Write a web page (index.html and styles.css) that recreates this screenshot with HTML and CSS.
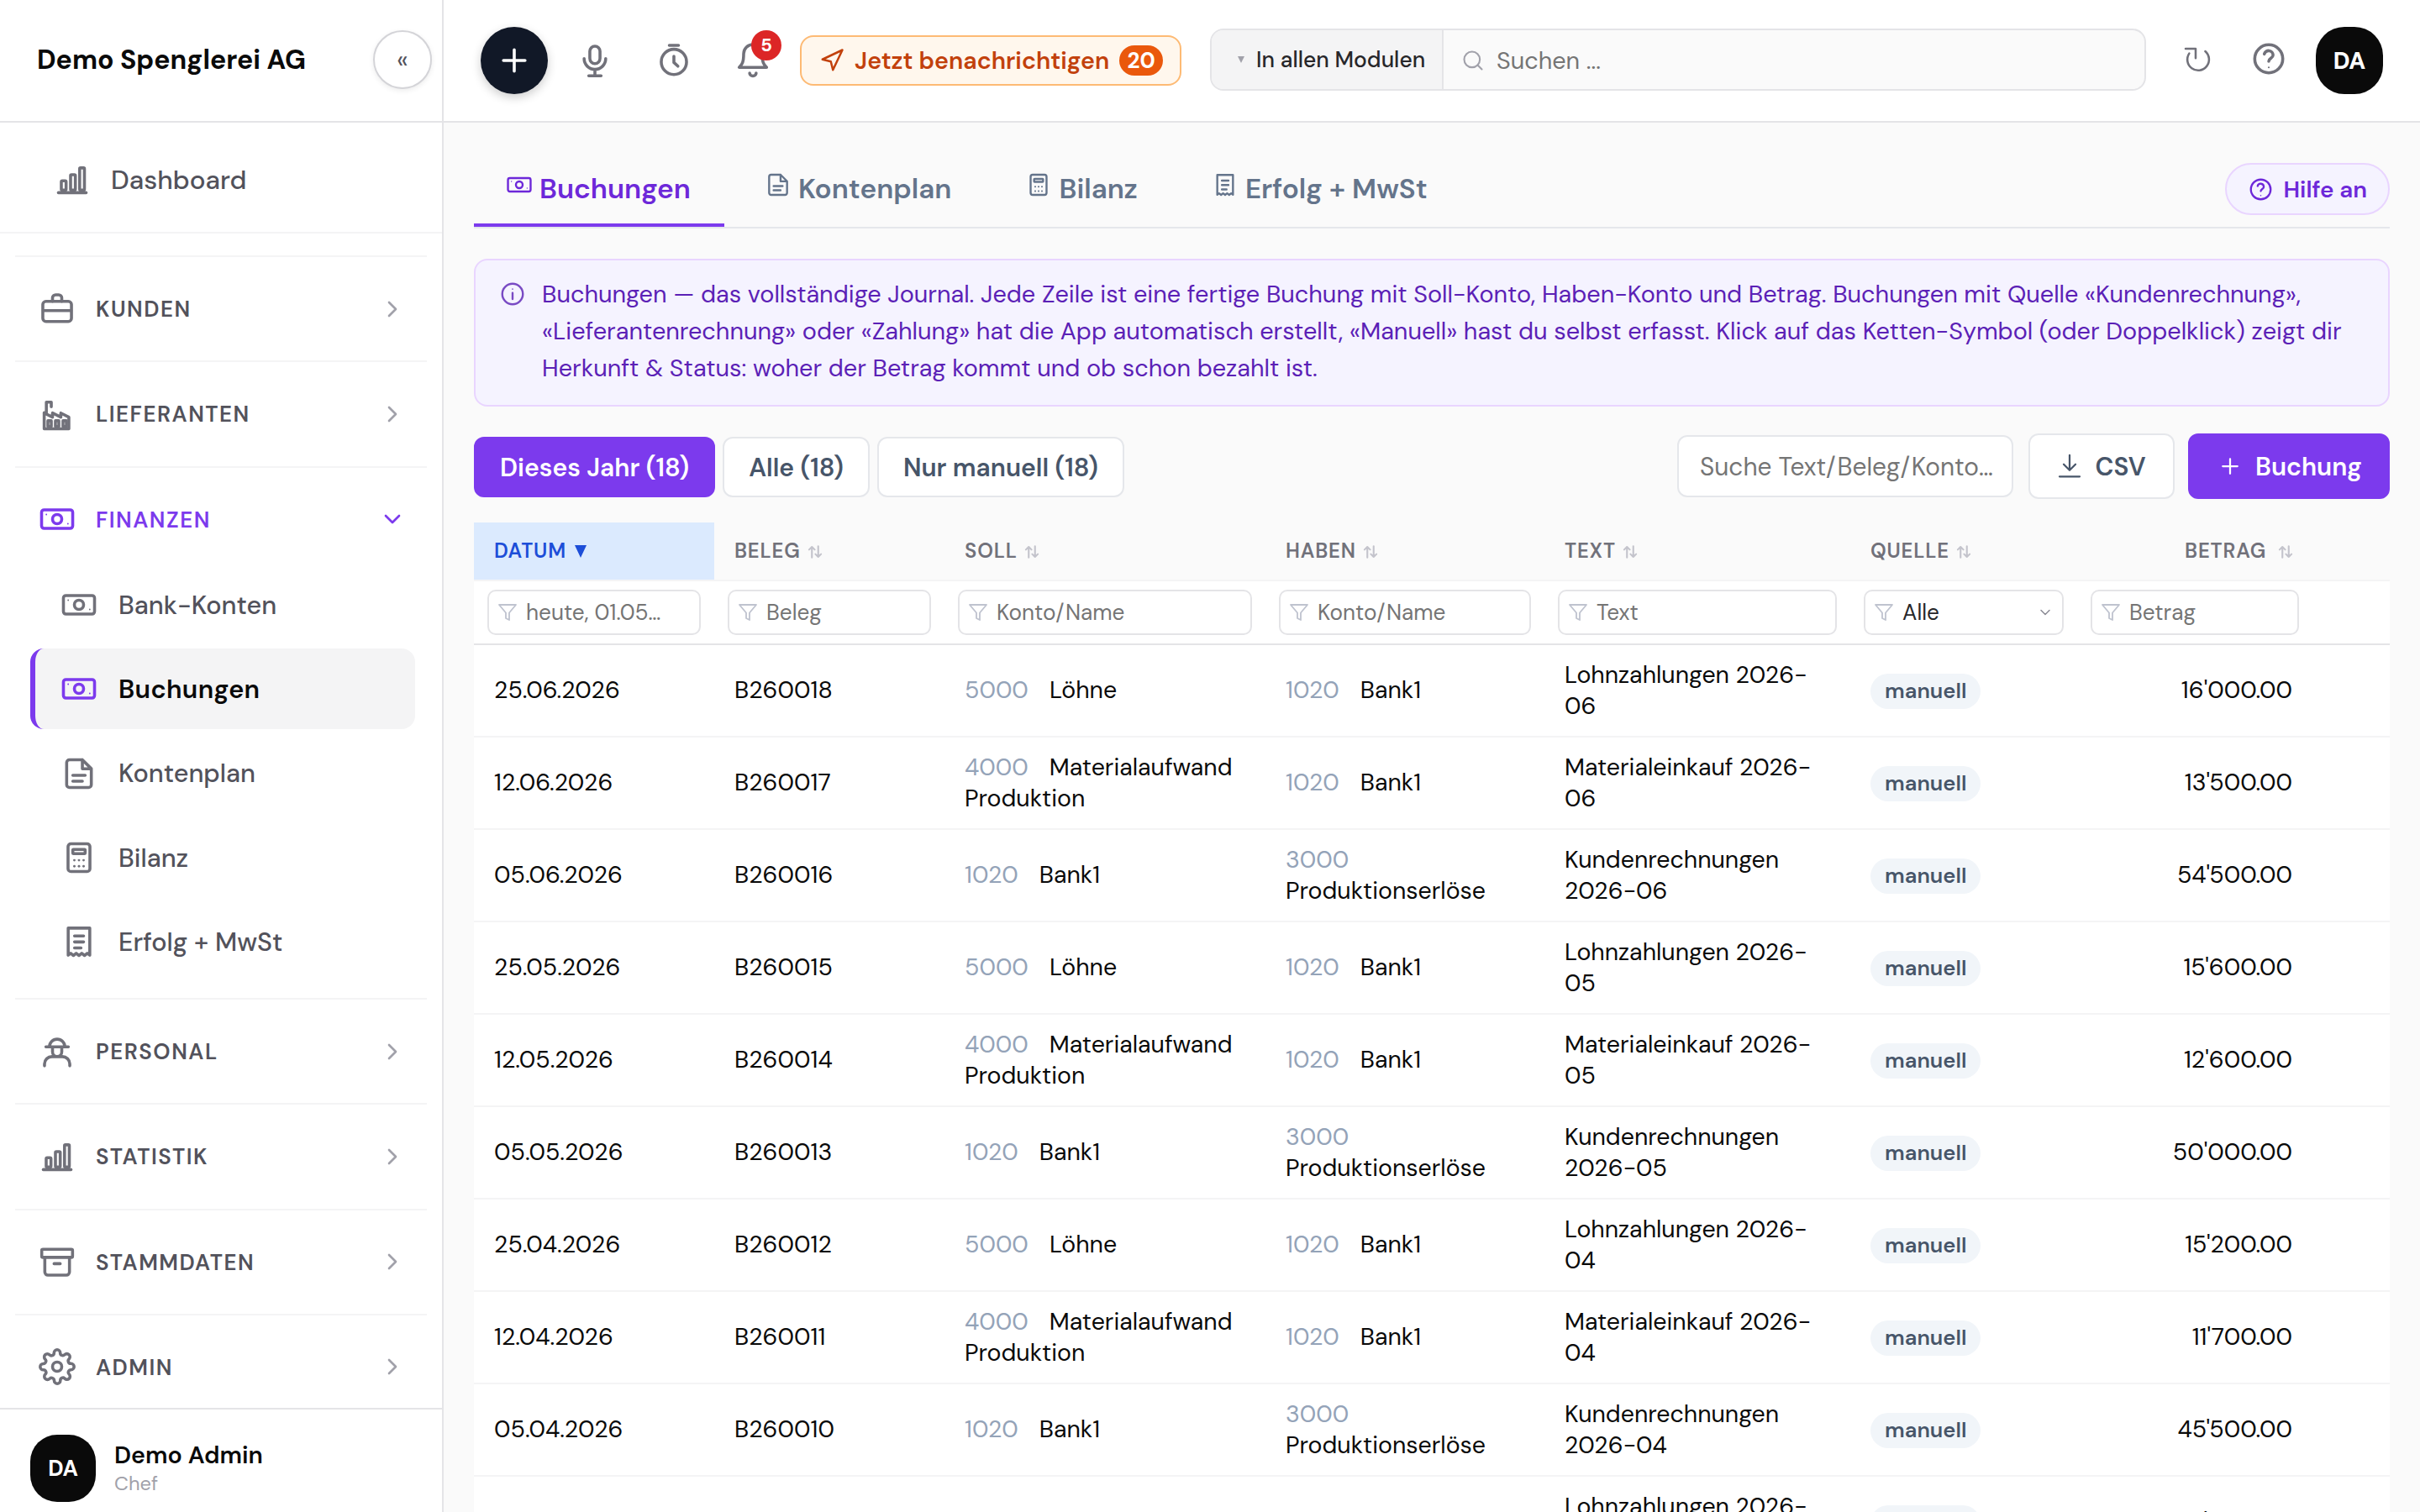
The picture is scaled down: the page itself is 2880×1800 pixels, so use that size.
FILE: index.html
```html
<!DOCTYPE html>
<html lang="de">
<head>
    <meta charset="UTF-8">
    <meta name="viewport" content="width=device-width, initial-scale=1.0">
    <title>Buchungen – Demo Spenglerei AG</title>
    <link rel="stylesheet" href="styles.css">
</head>
<body>
    <!-- Icons -->
    <svg class="sprite" xmlns="http://www.w3.org/2000/svg">
        <symbol id="i-plus" viewBox="0 0 24 24"><path d="M12 5v14M5 12h14"/></symbol>
        <symbol id="i-mic" viewBox="0 0 24 24"><rect x="8.7" y="2.7" width="6.6" height="11.3" rx="3.3"/><path d="M5 10.8a7 7 0 0 0 14 0M12 18v4M8 22h8"/></symbol>
        <symbol id="i-timer" viewBox="0 0 24 24"><circle cx="12" cy="12.9" r="8.2"/><path d="M9 2.2h6M12 9.3v4l2.6 2.4"/></symbol>
        <symbol id="i-bell" viewBox="0 0 24 24"><path d="M18 7.6A6 6 0 0 0 6 7.6c0 6-1.2 7-2.9 8.9h17.8C19.2 14.6 18 13.6 18 7.6M9.9 20.2a2.1 1.9 0 0 0 4.2 0"/></symbol>
        <symbol id="i-send" viewBox="0 0 24 24"><path d="M3 11 22 2l-9 19-2-8-8-2z"/></symbol>
        <symbol id="i-search" viewBox="0 0 24 24"><circle cx="11" cy="11" r="8"/><path d="m21 21-4.3-4.3"/></symbol>
        <symbol id="i-refresh" viewBox="0 0 24 24"><path d="M17.6 4.7a8.6 8.6 0 1 1-12.7 1.7M2 2.6h8v7.6"/></symbol>
        <symbol id="i-help" viewBox="0 0 24 24"><circle cx="12" cy="12" r="9.1"/><path d="M9.1 8.9a2.9 2.9 0 0 1 5.7.7c0 2-2.8 2-2.8 4"/><circle class="dot" cx="12" cy="17.6" r=".6"/></symbol>
        <symbol id="i-info" viewBox="0 0 24 24"><circle cx="12" cy="12" r="9.2"/><path d="M12 11v5.5"/><circle class="dot" cx="12" cy="7.6" r=".6"/></symbol>
        <symbol id="i-chart" viewBox="0 0 24 24"><path d="M3 20.4h18"/><rect x="4.9" y="12.7" width="3.1" height="6" rx=".6"/><rect x="10.9" y="8.7" width="3.1" height="10" rx=".6"/><rect x="16.8" y="4.3" width="3.1" height="14.4" rx=".6"/></symbol>
        <symbol id="i-briefcase" viewBox="0 0 24 24"><rect x="2.7" y="7" width="18.6" height="13" rx="2"/><path d="M9 7V4.7a2 2 0 0 1 2-2h2a2 2 0 0 1 2 2V7M3 13h18"/></symbol>
        <symbol id="i-factory" viewBox="0 0 24 24"><path d="M5 12V4.2h3.2v3M3.6 11v10.5h16V14l-5.2-2.7V14L9 11.3V14l-5.4-2.7"/><rect x="6" y="16.3" width="2.2" height="3.8"/><rect x="10.9" y="16.3" width="2.2" height="3.8"/><rect x="15.8" y="16.3" width="2.2" height="3.8"/></symbol>
        <symbol id="i-cash" viewBox="0 0 24 24"><rect x="1.9" y="6" width="20.2" height="12" rx="1.6"/><circle cx="12" cy="12" r="3"/><circle class="dot" cx="5" cy="9" r=".5"/><circle class="dot" cx="19" cy="15" r=".5"/></symbol>
        <symbol id="i-file" viewBox="0 0 24 24"><path d="M14.2 3H5.8A1.8 1.8 0 0 0 4 4.8v14.4A1.8 1.8 0 0 0 5.8 21h12.4a1.8 1.8 0 0 0 1.8-1.8V8.8L14.2 3v5.9H20M8 13.1h8M8 16.9h6.2"/></symbol>
        <symbol id="i-calc" viewBox="0 0 24 24"><rect x="4.9" y="3" width="14.2" height="18" rx="1.8"/><rect x="8" y="6.7" width="8" height="2.7" rx=".4"/><g class="dot"><circle cx="9" cy="13.7" r=".8"/><circle cx="12" cy="13.7" r=".8"/><circle cx="15" cy="13.7" r=".8"/><circle cx="9" cy="17.6" r=".8"/><circle cx="12" cy="17.6" r=".8"/><circle cx="15" cy="17.6" r=".8"/></g></symbol>
        <symbol id="i-receipt" viewBox="0 0 24 24"><path d="M5 3.2h14v17.6l-1.6-1.2-1.8 1.4-1.8-1.4-1.8 1.4-1.8-1.4-1.8 1.4-1.8-1.4L5 20.8zM9.1 8.3h5.9M9.1 12.2h5.9M9.1 16.1h4.2"/></symbol>
        <symbol id="i-worker" viewBox="0 0 24 24"><path d="M7 8.9a5 5 0 0 1 10 0M4.7 8.9h14.6M9 9v3.2a3 3 0 0 0 6 0V9M3.8 21.2v-1.3A4.8 4.8 0 0 1 8.6 15.2h6.8a4.8 4.8 0 0 1 4.8 4.7v1.3"/></symbol>
        <symbol id="i-archive" viewBox="0 0 24 24"><rect x="2" y="4" width="20" height="5.2" rx=".8"/><path d="M4 9.3v9.4a2 2 0 0 0 2 2h12a2 2 0 0 0 2-2V9.3M10 13.3h4"/></symbol>
        <symbol id="i-gear" viewBox="0 0 24 24"><circle cx="12" cy="12" r="3"/><path d="M19.4 15a1.65 1.65 0 0 0 .33 1.82l.06.06a2 2 0 0 1 0 2.83 2 2 0 0 1-2.83 0l-.06-.06a1.65 1.65 0 0 0-1.82-.33 1.65 1.65 0 0 0-1 1.51V21a2 2 0 0 1-2 2 2 2 0 0 1-2-2v-.09A1.65 1.65 0 0 0 9 19.4a1.65 1.65 0 0 0-1.82.33l-.06.06a2 2 0 0 1-2.83 0 2 2 0 0 1 0-2.83l.06-.06a1.65 1.65 0 0 0 .33-1.82 1.65 1.65 0 0 0-1.51-1H3a2 2 0 0 1-2-2 2 2 0 0 1 2-2h.09A1.65 1.65 0 0 0 4.6 9a1.65 1.65 0 0 0-.33-1.82l-.06-.06a2 2 0 0 1 0-2.83 2 2 0 0 1 2.83 0l.06.06a1.65 1.65 0 0 0 1.82.33H9a1.65 1.65 0 0 0 1-1.51V3a2 2 0 0 1 2-2 2 2 0 0 1 2 2v.09a1.65 1.65 0 0 0 1 1.51 1.65 1.65 0 0 0 1.82-.33l.06-.06a2 2 0 0 1 2.83 0 2 2 0 0 1 0 2.83l-.06.06a1.65 1.65 0 0 0-.33 1.82V9a1.65 1.65 0 0 0 1.51 1H21a2 2 0 0 1 2 2 2 2 0 0 1-2 2h-.09a1.65 1.65 0 0 0-1.51 1z"/></symbol>
        <symbol id="i-right" viewBox="0 0 24 24"><path d="m9 18 6-6-6-6"/></symbol>
        <symbol id="i-down" viewBox="0 0 24 24"><path d="m6 9 6 6 6-6"/></symbol>
        <symbol id="i-filter" viewBox="0 0 24 24"><path d="M22 3H2l8 9.46V19l4 2v-8.54L22 3z"/></symbol>
        <symbol id="i-download" viewBox="0 0 24 24"><path d="M12 1.5v14M6.4 10.200l5.600 5.600 5.600-5.600M2.400 21.800h19.200"/></symbol>
        <symbol id="i-sort" viewBox="0 0 24 24"><path d="M7 21V4M2.5 8.5 7 4l4.5 4.5M17 3v17M12.5 15.5 17 20l4.5-4.5"/></symbol>
    </svg>

    <div class="app">
        <!-- Sidebar -->
        <aside class="sidebar">
            <div class="brand">
                <span>Demo Spenglerei AG</span>
                <button class="collapse">«</button>
            </div>
            <a class="dashboard"><svg class="icon"><use href="#i-chart"/></svg>Dashboard</a>
            <nav class="nav">
                <div class="nav-group"><svg class="icon"><use href="#i-briefcase"/></svg><span>KUNDEN</span><svg class="chevron"><use href="#i-right"/></svg></div>
                <div class="nav-group"><svg class="icon"><use href="#i-factory"/></svg><span>LIEFERANTEN</span><svg class="chevron"><use href="#i-right"/></svg></div>
                <div class="nav-group open"><svg class="icon"><use href="#i-cash"/></svg><span>FINANZEN</span><svg class="chevron"><use href="#i-down"/></svg></div>
                <div class="nav-sub">
                    <a><svg class="icon"><use href="#i-cash"/></svg>Bank-Konten</a>
                    <a class="active"><svg class="icon"><use href="#i-cash"/></svg>Buchungen</a>
                    <a><svg class="icon"><use href="#i-file"/></svg>Kontenplan</a>
                    <a><svg class="icon"><use href="#i-calc"/></svg>Bilanz</a>
                    <a><svg class="icon"><use href="#i-receipt"/></svg>Erfolg + MwSt</a>
                </div>
                <div class="nav-group"><svg class="icon"><use href="#i-worker"/></svg><span>PERSONAL</span><svg class="chevron"><use href="#i-right"/></svg></div>
                <div class="nav-group"><svg class="icon"><use href="#i-chart"/></svg><span>STATISTIK</span><svg class="chevron"><use href="#i-right"/></svg></div>
                <div class="nav-group"><svg class="icon"><use href="#i-archive"/></svg><span>STAMMDATEN</span><svg class="chevron"><use href="#i-right"/></svg></div>
                <div class="nav-group"><svg class="icon"><use href="#i-gear"/></svg><span>ADMIN</span><svg class="chevron"><use href="#i-right"/></svg></div>
            </nav>
            <div class="user">
                <div class="avatar">DA</div>
                <div>
                    <div class="user-name">Demo Admin</div>
                    <div class="user-role">Chef</div>
                </div>
            </div>
        </aside>

        <div class="main">
            <!-- Top bar -->
            <header class="topbar">
                <button class="add"><svg class="icon"><use href="#i-plus"/></svg></button>
                <button class="tool"><svg class="icon"><use href="#i-mic"/></svg></button>
                <button class="tool"><svg class="icon"><use href="#i-timer"/></svg></button>
                <button class="tool"><svg class="icon"><use href="#i-bell"/></svg><span class="count">5</span></button>
                <button class="notify"><svg><use href="#i-send"/></svg>Jetzt benachrichtigen<span>20</span></button>
                <div class="search">
                    <div class="scope"><i></i>In allen Modulen</div>
                    <div class="query"><svg><use href="#i-search"/></svg>Suchen ...</div>
                </div>
                <button class="tool reload"><svg><use href="#i-refresh"/></svg></button>
                <button class="tool help"><svg class="icon"><use href="#i-help"/></svg></button>
                <div class="avatar">DA</div>
            </header>

            <main class="content">
                <div class="tabs">
                    <a class="tab active"><svg><use href="#i-cash"/></svg>Buchungen</a>
                    <a class="tab"><svg><use href="#i-file"/></svg>Kontenplan</a>
                    <a class="tab"><svg><use href="#i-calc"/></svg>Bilanz</a>
                    <a class="tab"><svg><use href="#i-receipt"/></svg>Erfolg + MwSt</a>
                    <button class="help-toggle"><svg><use href="#i-help"/></svg>Hilfe an</button>
                </div>

                <div class="info">
                    <svg><use href="#i-info"/></svg>
                    <p>Buchungen — das vollständige Journal. Jede Zeile ist eine fertige Buchung mit Soll-Konto, Haben-Konto und Betrag. Buchungen mit Quelle «Kundenrechnung»,<br>«Lieferantenrechnung» oder «Zahlung» hat die App automatisch erstellt, «Manuell» hast du selbst erfasst. Klick auf das Ketten-Symbol (oder Doppelklick) zeigt dir<br>Herkunft &amp; Status: woher der Betrag kommt und ob schon bezahlt ist.</p>
                </div>

                <div class="toolbar">
                    <button class="chip active">Dieses Jahr (18)</button>
                    <button class="chip">Alle (18)</button>
                    <button class="chip">Nur manuell (18)</button>
                    <div class="table-search">Suche Text/Beleg/Konto…</div>
                    <button class="btn csv"><svg><use href="#i-download"/></svg>CSV</button>
                    <button class="btn primary"><svg><use href="#i-plus"/></svg>Buchung</button>
                </div>

                <table class="journal">
                    <colgroup>
                        <col class="c-date"><col class="c-doc"><col class="c-debit"><col class="c-credit">
                        <col class="c-text"><col class="c-source"><col class="c-amount"><col class="c-actions">
                    </colgroup>
                    <thead>
                        <tr class="head">
                            <th class="sorted">DATUM <i></i></th>
                            <th>BELEG<svg><use href="#i-sort"/></svg></th>
                            <th>SOLL<svg><use href="#i-sort"/></svg></th>
                            <th>HABEN<svg><use href="#i-sort"/></svg></th>
                            <th>TEXT<svg><use href="#i-sort"/></svg></th>
                            <th>QUELLE<svg><use href="#i-sort"/></svg></th>
                            <th class="num">BETRAG<svg><use href="#i-sort"/></svg></th>
                            <th></th>
                        </tr>
                        <tr class="filters">
                            <td><div class="filter"><svg><use href="#i-filter"/></svg>heute, 01.05…</div></td>
                            <td><div class="filter"><svg><use href="#i-filter"/></svg>Beleg</div></td>
                            <td><div class="filter"><svg><use href="#i-filter"/></svg>Konto/Name</div></td>
                            <td><div class="filter"><svg><use href="#i-filter"/></svg>Konto/Name</div></td>
                            <td><div class="filter"><svg><use href="#i-filter"/></svg>Text</div></td>
                            <td><div class="filter select"><svg><use href="#i-filter"/></svg>Alle<svg class="caret"><use href="#i-down"/></svg></div></td>
                            <td><div class="filter"><svg><use href="#i-filter"/></svg>Betrag</div></td>
                            <td></td>
                        </tr>
                    </thead>
                    <tbody>
                        <tr><td>25.06.2026</td><td>B260018</td><td><span class="acc">5000</span>Löhne</td><td><span class="acc">1020</span>Bank1</td><td>Lohnzahlungen 2026-<br>06</td><td><span class="badge">manuell</span></td><td class="num">16'000.00</td><td></td></tr>
                        <tr><td>12.06.2026</td><td>B260017</td><td><span class="acc">4000</span>Materialaufwand<br>Produktion</td><td><span class="acc">1020</span>Bank1</td><td>Materialeinkauf 2026-<br>06</td><td><span class="badge">manuell</span></td><td class="num">13'500.00</td><td></td></tr>
                        <tr><td>05.06.2026</td><td>B260016</td><td><span class="acc">1020</span>Bank1</td><td><span class="acc">3000</span><br>Produktionserlöse</td><td>Kundenrechnungen<br>2026-06</td><td><span class="badge">manuell</span></td><td class="num">54'500.00</td><td></td></tr>
                        <tr><td>25.05.2026</td><td>B260015</td><td><span class="acc">5000</span>Löhne</td><td><span class="acc">1020</span>Bank1</td><td>Lohnzahlungen 2026-<br>05</td><td><span class="badge">manuell</span></td><td class="num">15'600.00</td><td></td></tr>
                        <tr><td>12.05.2026</td><td>B260014</td><td><span class="acc">4000</span>Materialaufwand<br>Produktion</td><td><span class="acc">1020</span>Bank1</td><td>Materialeinkauf 2026-<br>05</td><td><span class="badge">manuell</span></td><td class="num">12'600.00</td><td></td></tr>
                        <tr><td>05.05.2026</td><td>B260013</td><td><span class="acc">1020</span>Bank1</td><td><span class="acc">3000</span><br>Produktionserlöse</td><td>Kundenrechnungen<br>2026-05</td><td><span class="badge">manuell</span></td><td class="num">50'000.00</td><td></td></tr>
                        <tr><td>25.04.2026</td><td>B260012</td><td><span class="acc">5000</span>Löhne</td><td><span class="acc">1020</span>Bank1</td><td>Lohnzahlungen 2026-<br>04</td><td><span class="badge">manuell</span></td><td class="num">15'200.00</td><td></td></tr>
                        <tr><td>12.04.2026</td><td>B260011</td><td><span class="acc">4000</span>Materialaufwand<br>Produktion</td><td><span class="acc">1020</span>Bank1</td><td>Materialeinkauf 2026-<br>04</td><td><span class="badge">manuell</span></td><td class="num">11'700.00</td><td></td></tr>
                        <tr><td>05.04.2026</td><td>B260010</td><td><span class="acc">1020</span>Bank1</td><td><span class="acc">3000</span><br>Produktionserlöse</td><td>Kundenrechnungen<br>2026-04</td><td><span class="badge">manuell</span></td><td class="num">45'500.00</td><td></td></tr>
                        <tr><td>25.03.2026</td><td>B260009</td><td><span class="acc">5000</span>Löhne</td><td><span class="acc">1020</span>Bank1</td><td>Lohnzahlungen 2026-<br>03</td><td><span class="badge">manuell</span></td><td class="num">15'000.00</td><td></td></tr>
                    </tbody>
                </table>
            </main>
        </div>
    </div>
</body>
</html>
```
FILE: styles.css
```css
* { box-sizing: border-box; }

body {
    margin: 0;
    font-family: "DM Sans", Inter, sans-serif;
    font-size: 28.5px;
    color: #0a0a0a;
    background: #fafafa;
}

button {
    font-family: inherit;
    margin: 0;
    padding: 0;
    border: none;
    background: none;
}

p { margin: 0; }

svg {
    flex: none;
    fill: none;
    stroke: currentColor;
    stroke-width: 1.8;
    stroke-linecap: round;
    stroke-linejoin: round;
}

.sprite { display: none; }
.dot { fill: currentColor; stroke: none; }
.icon { width: 44px; height: 44px; stroke-width: 1.95; }

.app {
    display: flex;
    height: 1800px;
    overflow: hidden;
}

/* Sidebar */
.sidebar {
    width: 528px;
    flex: none;
    display: flex;
    flex-direction: column;
    background: #fff;
    border-right: 2px solid #e4e4e7;
}

.brand {
    height: 146px;
    flex: none;
    display: flex;
    align-items: center;
    justify-content: space-between;
    padding: 0 12px 2px 44px;
    border-bottom: 2px solid #e4e4e7;
    font-size: 32px;
    font-weight: 700;
}

.collapse {
    width: 70px;
    height: 70px;
    border: 2px solid #d4d4d8;
    border-radius: 50%;
    background: #fff;
    box-shadow: 0 2px 6px rgba(0, 0, 0, 0.08);
    font-size: 30px;
    color: #52525b;
}

.dashboard {
    height: 132px;
    flex: none;
    display: flex;
    align-items: center;
    gap: 24px;
    padding: 6px 0 0 64px;
    border-bottom: 2px solid #f4f4f5;
    font-size: 31.4px;
    font-weight: 500;
    color: #52525b;
}

.dashboard .icon, .nav .icon { color: #71717a; }

.nav {
    flex: 1;
    min-height: 0;
    overflow: hidden;
    padding: 26px 18px 0;
}

.nav-group {
    height: 125.33px;
    display: flex;
    align-items: center;
    padding: 0 25px 0 28px;
    border-top: 2px solid #f4f4f5;
    font-size: 26px;
    font-weight: 600;
    letter-spacing: 1.5px;
    color: #52525b;
}

.nav-group span { flex: 1; margin-left: 24px; padding-top: 1px; }
.nav-group .chevron { width: 32px; height: 32px; stroke-width: 2; color: #a1a1aa; }
.nav-group.open, .nav-group.open .icon, .nav-group.open .chevron { color: #7c3aed; }
.nav-group.open { height: 117px; padding-top: 8px; }

.nav-sub {
    display: flex;
    flex-direction: column;
    gap: 4.3px;
    padding: 0 14px 19px 18px;
}

.nav-sub a {
    height: 96px;
    display: flex;
    align-items: center;
    gap: 25px;
    padding: 1px 0 0 30px;
    border-left: 6px solid transparent;
    border-radius: 16px;
    font-size: 30.6px;
    font-weight: 500;
    color: #52525b;
}

.nav-sub a.active {
    background: #f4f4f5;
    border-left-color: #7c3aed;
    font-weight: 600;
    color: #0a0a0a;
    letter-spacing: 0.35px;
}

.nav-sub a.active .icon { color: #7c3aed; }

.user {
    height: 124px;
    flex: none;
    display: flex;
    align-items: center;
    gap: 22px;
    padding: 18px 36px 0;
    border-top: 2px solid #e4e4e7;
}

.avatar {
    width: 80px;
    height: 80px;
    flex: none;
    display: flex;
    align-items: center;
    justify-content: center;
    border-radius: 34px;
    background: #0a0a0a;
    color: #fff;
    font-size: 28px;
    font-weight: 800;
}

.user .avatar { width: 78px; font-size: 26px; font-weight: 700; border-radius: 32px; }
.user-name { font-size: 28.6px; font-weight: 600; line-height: 36px; }
.user-role { font-size: 23.6px; line-height: 30px; color: #a1a1aa; }

/* Top bar */
.main { flex: 1; min-width: 0; }

.topbar {
    height: 146px;
    display: flex;
    align-items: center;
    gap: 14px;
    padding: 0 44px;
    border-bottom: 2px solid #e4e4e7;
    background: #fff;
}

.add {
    width: 80px;
    height: 80px;
    display: flex;
    align-items: center;
    justify-content: center;
    margin-right: 2px;
    border-radius: 50%;
    background: #111827;
    color: #fff;
    box-shadow: 0 4px 12px rgba(0, 0, 0, 0.2);
}

.tool {
    position: relative;
    width: 80px;
    height: 80px;
    flex: none;
    display: flex;
    align-items: center;
    justify-content: center;
    color: #71717a;
}

.count {
    position: absolute;
    top: 4px;
    right: 6px;
    width: 36px;
    height: 36px;
    border-radius: 18px;
    background: #dc2626;
    color: #fff;
    font-size: 22px;
    font-weight: 700;
    line-height: 36px;
}

.notify {
    width: 454px;
    height: 60px;
    flex: none;
    display: flex;
    align-items: center;
    gap: 12px;
    margin: 0 20px 0 2px;
    padding-left: 21px;
    border: 2px solid #fdba74;
    border-radius: 16px;
    background: #fff7ed;
    color: #c2410c;
    font-size: 28.6px;
    font-weight: 600;
}

.notify svg { width: 30px; height: 30px; stroke-width: 2; }

.notify span {
    width: 52px;
    height: 36px;
    border-radius: 18px;
    background: #ea580c;
    color: #fff;
    font-size: 26px;
    font-weight: 700;
    line-height: 36px;
}

.search {
    flex: 1;
    height: 74px;
    display: flex;
    margin: 0 8px 2px 0;
    border: 2px solid #e4e4e7;
    border-radius: 16px;
    background: #fafafa;
    overflow: hidden;
}

.scope {
    width: 276px;
    display: flex;
    align-items: center;
    padding-left: 31px;
    gap: 14px;
    border-right: 2px solid #e4e4e7;
    background: #f4f4f5;
    font-size: 26.4px;
    font-weight: 500;
    color: #27272a;
}

.scope i {
    border: 4.5px solid transparent;
    border-top: 8px solid #a1a1aa;
    border-bottom: none;
}

.query {
    display: flex;
    align-items: center;
    gap: 14px;
    padding: 2px 0 0 21px;
    font-size: 28.8px;
    color: #757575;
}

.query svg { width: 28px; height: 28px; color: #a1a1aa; }
.reload { margin-right: -10px; }
.reload svg { width: 36px; height: 36px; stroke-width: 1.7; }
.help { padding-bottom: 4px; margin-right: 2px; }

/* Content */
.content { padding: 48px 36px 0; }

.tabs {
    height: 78px;
    display: flex;
    gap: 10px;
    border-bottom: 2px solid #e5e7eb;
}

.tab {
    height: 76px;
    display: flex;
    align-items: center;
    gap: 8px;
    padding: 0 40px 14px 38px;
    font-size: 33.3px;
    font-weight: 600;
    line-height: 60px;
    color: #64748b;
}

.tab svg { width: 32px; height: 32px; margin-bottom: 10px; }

.tab.active {
    border-bottom: 4px solid #7c3aed;
    padding-bottom: 10px;
    color: #6d28d9;
}

.help-toggle {
    height: 62px;
    display: flex;
    align-items: center;
    gap: 12px;
    margin-left: auto;
    padding: 1px 25px 0;
    border: 2px solid #e9d5ff;
    border-radius: 31px;
    background: #f5f3ff;
    color: #6d28d9;
    font-size: 27.8px;
    font-weight: 600;
}

.help-toggle svg { width: 31px; height: 31px; }

.info {
    height: 176px;
    display: flex;
    gap: 19px;
    margin-top: 36px;
    padding: 18px 28px;
    border: 2px solid #e9d5ff;
    border-radius: 16px;
    background: #f5f3ff;
    color: #5b21b6;
    font-size: 28.84px;
    line-height: 44px;
    white-space: nowrap;
}

.info svg { width: 32px; height: 32px; margin-top: 6px; opacity: 0.8; }

.toolbar {
    height: 78px;
    display: flex;
    align-items: center;
    margin: 32px 0 28px;
}

.chip {
    height: 72px;
    margin: 1px 9px 0 0;
    padding: 1px 29px 0;
    border: 2px solid #e5e7eb;
    border-radius: 12px;
    background: #fff;
    color: #475569;
    font-size: 30px;
    font-weight: 600;
}

.chip.active {
    border-color: #7c3aed;
    background: #7c3aed;
    color: #fff;
}

.table-search {
    width: 400px;
    height: 74px;
    margin-left: auto;
    padding-left: 25px;
    border: 2px solid #e5e7eb;
    border-radius: 12px;
    background: #fff;
    font-size: 29.8px;
    line-height: 72px;
    color: #757575;
}

.btn {
    height: 78px;
    display: flex;
    align-items: center;
    justify-content: center;
    gap: 15px;
    border: 2px solid #e5e7eb;
    border-radius: 12px;
    background: #fff;
    color: #475569;
    font-size: 30px;
    font-weight: 600;
}

.btn svg { width: 30px; height: 30px; }
.csv { width: 174px; margin: 0 16px 0 18px; }
.primary { width: 240px; padding-left: 2px; border-color: #7c3aed; background: #7c3aed; color: #fff; }

/* Journal table */
.journal {
    width: 2280px;
    table-layout: fixed;
    border-collapse: separate;
    border-spacing: 0;
    background: #fff;
}

.c-date { width: 286px; }
.c-doc { width: 274px; }
.c-debit { width: 382px; }
.c-credit { width: 332px; }
.c-text { width: 364px; }
.c-source { width: 270px; }
.c-amount { width: 280px; }
.c-actions { width: 92px; }

th {
    height: 70px;
    padding: 0 24px 2px;
    border-bottom: 2px solid #f4f4f5;
    background: #fafafa;
    font-size: 24px;
    font-weight: 600;
    letter-spacing: 0.8px;
    text-align: left;
    color: #71717a;
}

th svg { width: 18px; height: 18px; margin-left: 8px; vertical-align: -2px; stroke-width: 2.8; color: #c4c4cc; }
th.num svg { margin-left: 14px; margin-right: -1px; }

th.sorted { background: #dbeafe; color: #1d4ed8; }

th.sorted i {
    display: inline-block;
    margin-left: 3px;
    border: 7.5px solid transparent;
    border-top: 15px solid #1d4ed8;
    border-bottom: none;
}

.num { text-align: right; }

td {
    height: 110px;
    padding: 1px 24px 0;
    border-bottom: 2px solid #f4f4f5;
    line-height: 36.4px;
    white-space: nowrap;
}

.filters td {
    height: 76px;
    padding: 0 16px;
    border-bottom-color: #e4e4e7;
}

.filter {
    height: 54px;
    display: flex;
    align-items: center;
    gap: 10px;
    padding: 0 10px;
    border: 2px solid #e4e4e7;
    border-radius: 10px;
    font-size: 26.2px;
    color: #757575;
}

.filter svg { width: 24px; height: 24px; color: #bfc3cf; }
.filter.select { color: #27272a; }
.filter .caret { width: 20px; height: 20px; margin-left: auto; color: #8b8b95; }

.acc { margin-right: 25px; color: #94a3b8; }

.badge {
    display: inline-block;
    height: 42px;
    padding: 0 17px;
    border-radius: 21px;
    background: #f1f5f9;
    color: #475569;
    font-size: 25.6px;
    font-weight: 600;
    line-height: 42px;
    vertical-align: middle;
}
```
